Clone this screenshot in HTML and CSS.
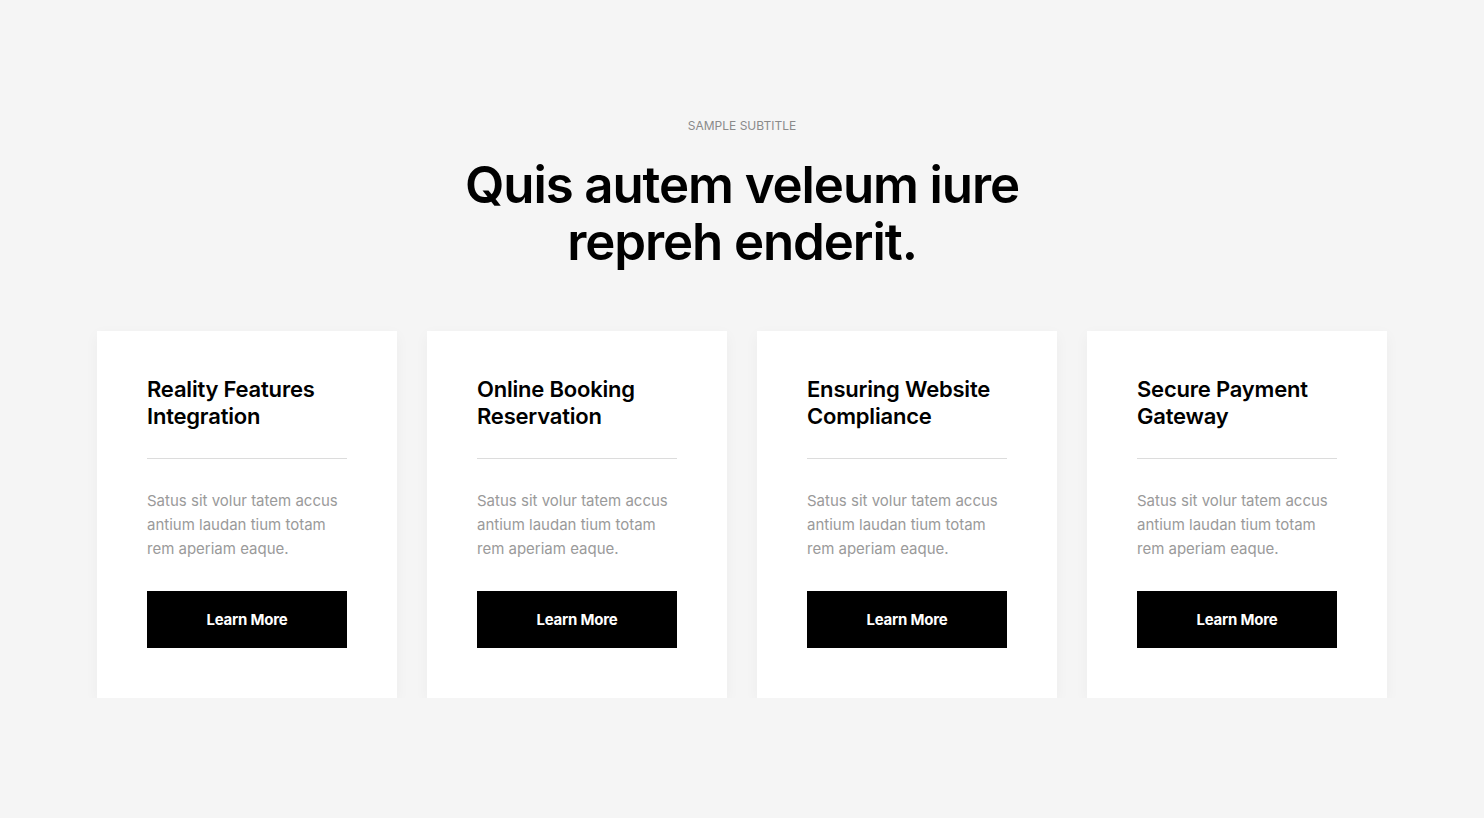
FILE: index.html
```html
<!DOCTYPE html>
<html lang="en">
<head>
<meta charset="utf-8">
<title>Services</title>
<link rel="stylesheet" href="styles.css">
</head>
<body>
<section class="section">
  <header class="head">
    <p class="subtitle">SAMPLE SUBTITLE</p>
    <h1 class="title">Quis autem veleum iure<br>repreh enderit.</h1>
  </header>
  <div class="cards">
    <article class="card">
      <h2 class="card-title">Reality Features<br>Integration</h2>
      <hr class="divider">
      <p class="card-text">Satus sit volur tatem accus antium laudan tium totam rem aperiam eaque.</p>
      <a class="btn" href="#">Learn More</a>
    </article>
    <article class="card">
      <h2 class="card-title">Online Booking<br>Reservation</h2>
      <hr class="divider">
      <p class="card-text">Satus sit volur tatem accus antium laudan tium totam rem aperiam eaque.</p>
      <a class="btn" href="#">Learn More</a>
    </article>
    <article class="card">
      <h2 class="card-title">Ensuring Website<br>Compliance</h2>
      <hr class="divider">
      <p class="card-text">Satus sit volur tatem accus antium laudan tium totam rem aperiam eaque.</p>
      <a class="btn" href="#">Learn More</a>
    </article>
    <article class="card">
      <h2 class="card-title">Secure Payment<br>Gateway</h2>
      <hr class="divider">
      <p class="card-text">Satus sit volur tatem accus antium laudan tium totam rem aperiam eaque.</p>
      <a class="btn" href="#">Learn More</a>
    </article>
  </div>
</section>
</body>
</html>
```

FILE: styles.css
```css
* { box-sizing: border-box; }
html, body {
  margin: 0;
  padding: 0;
  background: #f5f5f5;
  font-family: Inter, "Noto Sans", sans-serif;
  color: #000;
}
.section {
  padding: 117px 0 0;
  display: flex;
  flex-direction: column;
  align-items: center;
}
.head {
  text-align: center;
}
.subtitle {
  margin: 0;
  font-size: 12px;
  line-height: 18px;
  color: #8a8a8a;
  letter-spacing: 0;
}
.title {
  margin: 21px 0 0;
  font-size: 51px;
  line-height: 57px;
  font-weight: 600;
  letter-spacing: -1.1px;
}
.cards {
  margin-top: 61px;
  display: grid;
  grid-template-columns: repeat(4, 300px);
  gap: 30px;
}
.card {
  background: #fff;
  padding: 45px 50px 50px;
  box-shadow: 0 4px 14px rgba(0,0,0,0.04);
  display: flex;
  flex-direction: column;
}
.card-title {
  margin: 0;
  font-size: 22px;
  line-height: 27px;
  font-weight: 600;
  letter-spacing: -0.2px;
}
.divider {
  margin: 28px 0 0;
  border: 0;
  border-top: 1px solid #dcdcdc;
  height: 0;
}
.card-text {
  margin: 30px 0 0;
  font-size: 15px;
  line-height: 24px;
  color: #9a9a9a;
  letter-spacing: 0;
}
.btn {
  margin-top: 30px;
  height: 57px;
  background: #000;
  color: #fff;
  text-decoration: none;
  display: flex;
  align-items: center;
  justify-content: center;
  font-size: 15px;
  font-weight: 700;
  letter-spacing: -0.2px;
}
```
